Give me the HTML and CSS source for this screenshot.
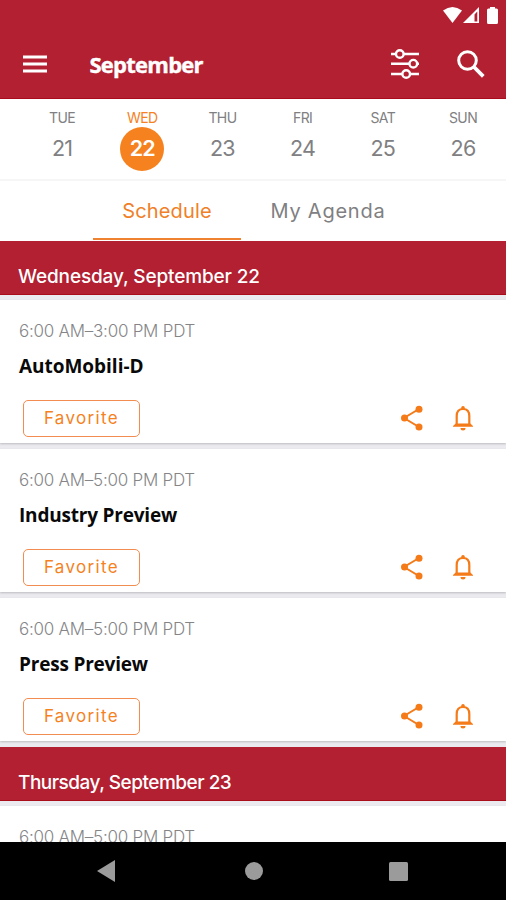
FILE: index.html
```html
<!DOCTYPE html>
<html lang="en">
<head>
<meta charset="utf-8">
<title>September</title>
<link rel="stylesheet" href="styles.css">
</head>
<body>
<svg class="defs" aria-hidden="true">
  <symbol id="share" viewBox="0 0 24 28">
    <path d="M19 5 4 14 19 23" fill="none" stroke="currentColor" stroke-width="2"/>
    <circle cx="19" cy="5.200" r="3.500"/><circle cx="4.500" cy="14" r="3.500"/><circle cx="19" cy="23" r="3.500"/>
  </symbol>
  <symbol id="bell" viewBox="0 0 22 28">
    <path d="M4.700 20.500V12C4.700 7.500 7 5 11 5S17.300 7.500 17.300 12V20.500" fill="none" stroke="currentColor" stroke-width="2.200"/>
    <path d="M9.200 5V3.800a1.800 1.800 0 0 1 3.600 0V5zM1 22l2.700-2.500h14.600l2.700 2.500v.7H1zM8.500 24h5a2.500 2.500 0 0 1-5 0z"/>
  </symbol>
</svg>
<div class="screen">
  <header class="appbar">
    <div class="status">
      <svg class="wifi" viewBox="0 0 19 16"><path d="M0 3.500Q9.500-3.500 19 3.500L9.500 16z"/></svg>
      <svg class="signal" viewBox="0 0 16 16"><path fill-rule="evenodd" d="M16 0V16H0zM14.300 4.500 11.500 7.500V14.500H14.300z"/></svg>
      <svg class="battery" viewBox="0 0 11 17"><path d="M3 0h5v1.500h1.500Q11 1.500 11 3v12.500Q11 17 9.500 17h-8Q0 17 0 15.500V3Q0 1.500 1.500 1.500H3z"/></svg>
    </div>
    <div class="toolbar">
      <svg class="menu" viewBox="0 0 24 18"><path d="M0 2h24M0 9h24M0 16h24" stroke="currentColor" stroke-width="2.800"/></svg>
      <h1>September</h1>
      <svg class="filter" viewBox="0 0 28 32"><g fill="none" stroke="currentColor" stroke-width="2.400"><path d="M0 6h5M12.500 6H28M0 15.700h18.500M26 15.700h2M0 26h11.500M19 26h9"/><circle cx="8.800" cy="6" r="3.800"/><circle cx="22.300" cy="15.700" r="3.800"/><circle cx="15.200" cy="26" r="3.800"/></g></svg>
      <svg class="search" viewBox="0 0 28 28"><g fill="none" stroke="currentColor"><circle cx="10.500" cy="10.500" r="8.800" stroke-width="3"/><path d="m16.500 16.500 9.800 9.800" stroke-width="3.800"/></g></svg>
    </div>
  </header>
  <nav class="days">
    <div class="day"><span>TUE</span><b>21</b></div>
    <div class="day active"><span>WED</span><b>22</b></div>
    <div class="day"><span>THU</span><b>23</b></div>
    <div class="day"><span>FRI</span><b>24</b></div>
    <div class="day"><span>SAT</span><b>25</b></div>
    <div class="day"><span>SUN</span><b>26</b></div>
  </nav>
  <div class="tabs">
    <div class="tab selected">Schedule</div>
    <div class="tab agenda">My Agenda</div>
  </div>
  <main class="list">
    <h2>Wednesday, September 22</h2>
    <article>
      <p class="time">6:00 AM–3:00 PM PDT</p>
      <h3 class="auto">AutoMobili-D</h3>
      <div class="actions"><button>Favorite</button><svg class="share"><use href="#share"/></svg><svg class="bell"><use href="#bell"/></svg></div>
    </article>
    <article>
      <p class="time">6:00 AM–5:00 PM PDT</p>
      <h3>Industry Preview</h3>
      <div class="actions"><button>Favorite</button><svg class="share"><use href="#share"/></svg><svg class="bell"><use href="#bell"/></svg></div>
    </article>
    <article>
      <p class="time">6:00 AM–5:00 PM PDT</p>
      <h3>Press Preview</h3>
      <div class="actions"><button>Favorite</button><svg class="share"><use href="#share"/></svg><svg class="bell"><use href="#bell"/></svg></div>
    </article>
    <h2 class="thursday">Thursday, September 23</h2>
    <article>
      <p class="time">6:00 AM–5:00 PM PDT</p>
    </article>
  </main>
  <footer class="system">
    <svg class="back" viewBox="0 0 18 22"><path d="M18 0v22L0 11z"/></svg>
    <svg class="home" viewBox="0 0 18 18"><circle cx="9" cy="9" r="9"/></svg>
    <svg class="recent" viewBox="0 0 19 19"><rect width="19" height="19" rx="1.500"/></svg>
  </footer>
</div>
</body>
</html>
```
FILE: styles.css
```css
* { box-sizing: border-box; }
body, h1, h2, h3, p { margin: 0; }
body { font-family: Inter, "Liberation Sans", sans-serif; background: #fff; }
svg { display: block; fill: currentColor; flex: none; }
.defs { position: absolute; width: 0; height: 0; }
.screen { width: 506px; height: 900px; display: flex; flex-direction: column; overflow: hidden; }

.appbar { height: 98.500px; flex: none; background: #b22032; color: #fff; border-bottom: 1px solid #a90d1c; }
.status { height: 30px; display: flex; justify-content: flex-end; align-items: flex-start; padding: 7px 8px 0 0; }
.wifi { width: 19px; height: 16px; margin-right: 1px; }
.signal { width: 16px; height: 16px; margin-right: 8px; }
.battery { width: 11px; height: 17px; }
.toolbar { height: 68px; display: flex; align-items: center; padding: 0 21px 0 23px; }
.menu { width: 24px; height: 18px; }
h1 { font: 700 22px/30px "Open Sans", sans-serif; letter-spacing: -.75px; margin-left: 42.500px; padding-bottom: 1px; flex: 1; -webkit-text-stroke: .4px; }
.filter { width: 28px; height: 32px; margin-right: 38px; }
.search { width: 28px; height: 28px; }

.days { height: 82px; flex: none; display: flex; padding-left: 22px; border-bottom: 2px solid #f6f6f6; color: #808082; }
.day { width: 80.200px; flex: none; display: flex; flex-direction: column; align-items: center; padding-top: 9px; }
.day span { font-size: 14px; line-height: 19px; letter-spacing: -.6px; }
.day b { width: 44px; height: 44px; border-radius: 50%; font-size: 21.500px; font-weight: 400; line-height: 43px; text-align: center; letter-spacing: -.8px; }
.active { color: #f5821f; }
.active b { background: #f5821f; color: #fff; font-weight: 600; }

.tabs { height: 60.500px; flex: none; display: flex; padding-left: 93px; color: #808082; font-size: 20px; line-height: 60px; }
.tab { width: 148px; height: 59.500px; text-align: center; letter-spacing: .15px; }
.selected { color: #f08028; border-bottom: 2px solid #ee8230; }
.agenda { width: 174px; letter-spacing: .75px; }

.list { flex: 1; min-height: 0; overflow: hidden; background: #ebebef; }
h2 { height: 54px; margin-bottom: 5px; padding: 18px 18px 0; background: #b22032; color: #fff; border-bottom: 1px solid #a90d1c; font-size: 19px; font-weight: 500; line-height: 36px; letter-spacing: -.14px; white-space: nowrap; }
.thursday { letter-spacing: -.5px; }
article { height: 143px; margin-bottom: 6px; padding: 19px 32px 0 19px; background: #fff; box-shadow: 0 1px 2px #bbbbc0; }
.time { color: #858587; font-size: 17px; font-weight: 300; line-height: 24px; letter-spacing: -.25px; }
h3 { font: 700 19px/28px "Open Sans", sans-serif; color: #090909; margin-top: 9px; letter-spacing: -.2px; }
.auto { letter-spacing: -.03px; }
.actions { display: flex; align-items: center; margin-top: 19px; padding-left: 4px; height: 38px; }
button { width: 117px; height: 37px; padding: 0; margin-right: auto; border: 1px solid #f28c50; border-radius: 5px; background: #fff; color: #f5821f; font: 400 17px/35px Inter, sans-serif; letter-spacing: 1.350px; }
.share { width: 24px; height: 28px; margin-right: 28px; color: #f57a18; }
.bell { width: 22px; height: 28px; color: #f57a18; }

.system { height: 58px; flex: none; display: flex; align-items: center; background: #000; color: #9b9b9b; padding-left: 97px; }
.back { width: 18px; height: 22px; margin-right: 129.500px; }
.home { width: 18px; height: 18px; margin-right: 126.500px; }
.recent { width: 19px; height: 19px; }
```
